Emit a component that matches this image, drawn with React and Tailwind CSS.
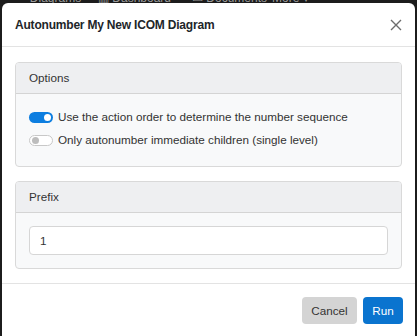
import React from "react";

function Toggle({ on }) {
  return on ? (
    <span className="relative inline-block w-6 h-[11px] rounded-full bg-[#0d7ee0] shrink-0">
      <span className="absolute right-[2px] top-[2px] w-[7px] h-[7px] rounded-full bg-white" />
    </span>
  ) : (
    <span className="relative inline-block w-6 h-[11px] rounded-full bg-white border border-[#c8c8c8] shrink-0">
      <span className="absolute left-[2px] top-[1px] w-[7px] h-[7px] rounded-full bg-[#bdbdbd]" />
    </span>
  );
}

export default function App() {
  return (
    <div className="relative w-[417px] h-[336px] overflow-hidden bg-[#1c1c1c]" style={{ fontFamily: '"Liberation Sans", Arial, sans-serif' }}>
      <div className="flex items-center -mt-[9px] h-[14px] text-[12px] text-[#9a9a9a] whitespace-nowrap overflow-hidden">
        <span className="ml-[18px] w-[72px] shrink-0">▪▪ Diagrams</span>
        <span className="ml-[8px] w-[86px] shrink-0">▥ Dashboard</span>
        <span className="ml-[8px] w-[72px] shrink-0">▭ Documents</span>
        <span className="ml-[8px] shrink-0">More ▾</span>
      </div>
      <div className="absolute left-[2px] top-[3px] w-[413px] h-[340px] bg-white rounded-[6px] flex flex-col">
        <div className="flex items-center justify-between h-[44px] pl-[13px] pr-[12px] border-b border-[#e3e3e3]">
          <span className="font-bold text-[12px] tracking-[-0.2px] text-[#212529]">Autonumber My New ICOM Diagram</span>
          <svg width="12" height="12" viewBox="0 0 12 12" className="mr-[1px]">
            <path d="M1 1 L11 11 M11 1 L1 11" stroke="#6c6c6c" strokeWidth="1.4" />
          </svg>
        </div>
        <div className="flex flex-col gap-[14px] px-[13px] pt-[15px]">
          <div className="rounded-[4px] border border-[#d9d9d9] bg-[#f8f9fa] overflow-hidden">
            <div className="h-[31px] flex items-center px-[13px] bg-[#eeeff1] border-b border-[#d4d4d4] text-[11.7px] text-[#333]">Options</div>
            <div className="flex flex-col gap-[7px] px-[13px] pt-[15px] pb-[18px] text-[11.7px] leading-[16px] text-[#333]">
              <div className="flex items-center gap-[5px]">
                <Toggle on />
                <span>Use the action order to determine the number sequence</span>
              </div>
              <div className="flex items-center gap-[5px]">
                <Toggle />
                <span>Only autonumber immediate children (single level)</span>
              </div>
            </div>
          </div>
          <div className="rounded-[4px] border border-[#d9d9d9] bg-[#f8f9fa] overflow-hidden">
            <div className="h-[31px] flex items-center px-[13px] bg-[#eeeff1] border-b border-[#d4d4d4] text-[11.7px] text-[#333]">Prefix</div>
            <div className="px-[13px] pt-[13px] pb-[13px]">
              <div className="h-[29px] flex items-center px-[10px] bg-white border border-[#d6d6d6] rounded-[4px] text-[11.7px] text-[#333]">1</div>
            </div>
          </div>
        </div>
        <div className="mt-[14px] border-t border-[#e3e3e3] flex justify-end gap-[6px] pl-[10px] pr-[12px] pt-[13px]">
          <button className="h-[27px] w-[55px] rounded-[4px] bg-[#d4d4d4] text-[11.7px] text-[#333]">Cancel</button>
          <button className="h-[27px] w-[40px] rounded-[4px] bg-[#0a74cf] text-[11.7px] text-white">Run</button>
        </div>
      </div>
    </div>
  );
}
